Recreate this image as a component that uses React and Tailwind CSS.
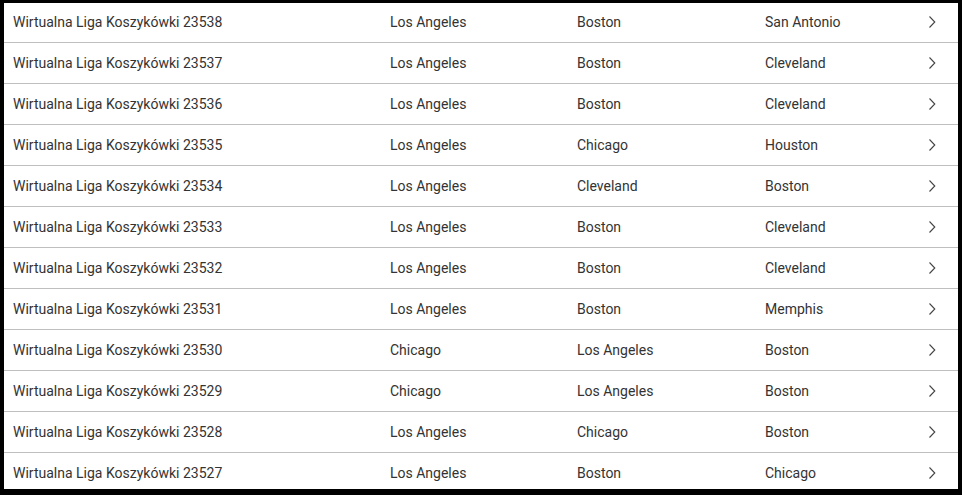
import React from "react";

const rows = [
  ["23538", "Los Angeles", "Boston", "San Antonio"],
  ["23537", "Los Angeles", "Boston", "Cleveland"],
  ["23536", "Los Angeles", "Boston", "Cleveland"],
  ["23535", "Los Angeles", "Chicago", "Houston"],
  ["23534", "Los Angeles", "Cleveland", "Boston"],
  ["23533", "Los Angeles", "Boston", "Cleveland"],
  ["23532", "Los Angeles", "Boston", "Cleveland"],
  ["23531", "Los Angeles", "Boston", "Memphis"],
  ["23530", "Chicago", "Los Angeles", "Boston"],
  ["23529", "Chicago", "Los Angeles", "Boston"],
  ["23528", "Los Angeles", "Chicago", "Boston"],
  ["23527", "Los Angeles", "Boston", "Chicago"],
];

function Chevron() {
  return (
    <svg width="8" height="14" viewBox="0 0 8 14" fill="none">
      <path d="M1.5 1.5 L6.8 7 L1.5 12.5" stroke="#444" strokeWidth="1.1" />
    </svg>
  );
}

export default function App() {
  return (
    <div className="w-[962px] h-[495px] bg-black pt-[3px] px-[4px] pb-[6px] box-border">
      <div className="bg-white h-full overflow-hidden">
        <div className="-mt-px">
          {rows.map((r, i) => (
            <div
              key={i}
              className="flex items-center h-[41px] border-b border-[#bfbfbf] pl-[9px] pr-[22px] text-[14px] text-[#333] font-['Roboto',sans-serif]"
            >
              <div className="w-[377px] shrink-0">Wirtualna Liga Koszykówki {r[0]}</div>
              <div className="w-[187px] shrink-0">{r[1]}</div>
              <div className="w-[188px] shrink-0">{r[2]}</div>
              <div className="flex-1">{r[3]}</div>
              <Chevron />
            </div>
          ))}
        </div>
      </div>
    </div>
  );
}
